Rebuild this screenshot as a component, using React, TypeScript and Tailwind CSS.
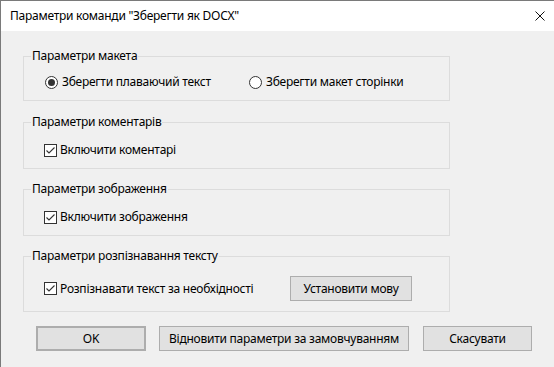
import type { ReactNode } from "react";

const font = { fontFamily: '"Noto Sans", "Open Sans", sans-serif' };

function Checkbox({ label }: { label: string }) {
  return (
    <label className="flex h-4 items-center">
      <span className="flex h-[13px] w-[13px] shrink-0 items-center justify-center border border-[#333] bg-white">
        <svg width="11" height="11" viewBox="0 0 11 11">
          <path d="M1.5 5.5 L4 8 L9.5 2.5" fill="none" stroke="#333" strokeWidth="1.1" />
        </svg>
      </span>
      <span className="ml-[3px]">{label}</span>
    </label>
  );
}

function Radio({ label, checked }: { label: string; checked?: boolean }) {
  return (
    <label className="flex h-4 items-center">
      <span className="flex h-[13px] w-[13px] shrink-0 items-center justify-center rounded-full border border-[#333] bg-white">
        {checked ? <span className="h-[7px] w-[7px] rounded-full bg-[#333]" /> : null}
      </span>
      <span className="ml-[4px]">{label}</span>
    </label>
  );
}

function Group({ title, children, className }: { title: string; children: ReactNode; className: string }) {
  return (
    <fieldset className={`w-[427px] border border-[#dcdcdc] pl-[7px] ${className}`}>
      <legend className="px-[1px] leading-4">{title}</legend>
      {children}
    </fieldset>
  );
}

function Button({ children, className }: { children: ReactNode; className: string }) {
  return (
    <button
      type="button"
      className={`flex items-center justify-center border border-[#adadad] bg-[#e1e1e1] text-black ${className}`}
    >
      {children}
    </button>
  );
}

export default function App() {
  return (
    <div
      className="h-[367px] w-[554px] overflow-hidden border-l border-t border-[#7a7a7a] bg-[#f0f0f0] text-[12px] tracking-[-0.25px] text-black"
      style={font}
    >
      <div className="flex h-[30px] w-[553px] items-center bg-white pl-[9px]">
        <span>Параметри команди "Зберегти як DOCX"</span>
        <svg className="ml-auto mr-[9px]" width="10" height="10" viewBox="0 0 10 10">
          <path d="M0.5 0.5 L9.5 9.5 M9.5 0.5 L0.5 9.5" stroke="#111" strokeWidth="1" />
        </svg>
      </div>

      <div className="pl-[22px] pt-[17px]">
        <Group title="Параметри макета" className="pb-[10px]">
          <div className="ml-[14px] mt-[10px] flex">
            <div className="w-[204px]">
              <Radio label="Зберегти плаваючий текст" checked />
            </div>
            <Radio label="Зберегти макет сторінки" />
          </div>
        </Group>

        <Group title="Параметри коментарів" className="mt-[13px] pb-[10px]">
          <div className="ml-[13px] mt-[12px]">
            <Checkbox label="Включити коментарі" />
          </div>
        </Group>

        <Group title="Параметри зображення" className="mt-[12px] pb-[10px]">
          <div className="ml-[13px] mt-[12px]">
            <Checkbox label="Включити зображення" />
          </div>
        </Group>

        <Group title="Параметри розпізнавання тексту" className="mt-[12px] pb-[10px]">
          <div className="ml-[13px] mt-[12px] flex h-[25px] items-center">
            <Checkbox label="Розпізнавати текст за необхідності" />
            <Button className="ml-auto mr-[37px] h-[25px] w-[122px]">Установити мову</Button>
          </div>
        </Group>

        <div className="ml-[13px] mt-[14px] flex">
          <Button className="h-[25px] w-[110px] border-2 border-[#0078d7]">OK</Button>
          <Button className="ml-[13px] h-[25px] w-[250px]">Відновити параметри за замовчуванням</Button>
          <Button className="ml-[14px] h-[25px] w-[109px]">Скасувати</Button>
        </div>
      </div>
    </div>
  );
}
